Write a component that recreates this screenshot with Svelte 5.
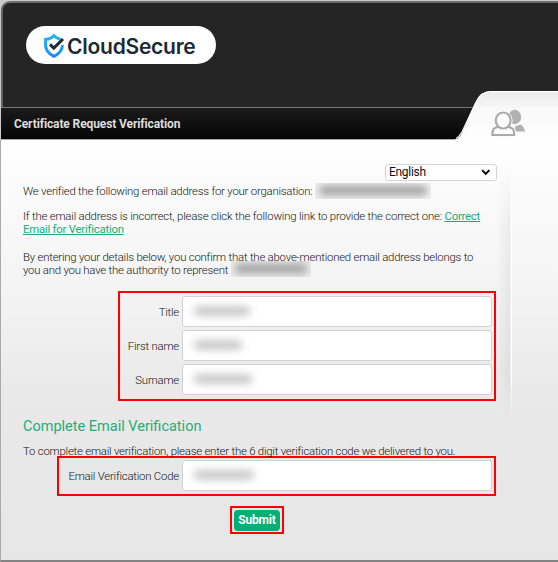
<script>
  const details = [
    { id: 'title', label: 'Title', width: 56 },
    { id: 'first', label: 'First name', width: 48 },
    { id: 'surname', label: 'Surname', width: 58 }
  ];
</script>

<div class="page">
  <header>
    <div class="logo">
      <svg width="22" height="26" viewBox="0 0 22 26" fill="none">
        <defs>
          <linearGradient id="blue" x1="0" y1="0" x2="0" y2="1">
            <stop offset="0" stop-color="#20b5f2" />
            <stop offset="1" stop-color="#168bff" />
          </linearGradient>
        </defs>
        <path d="M17.6 6.3C14.6 5.6 12.7 4.6 11 2.7C9 4.8 6.3 6 2.6 6.4V12C2.6 17.3 5.5 20.7 11 23.3C16.5 20.7 19.3 17.5 19.5 12" stroke="url(#blue)" stroke-width="3" />
        <path d="M7 11.3L10.8 15L20 6" stroke="#1b2b36" stroke-width="3.1" />
      </svg>
      <span>CloudSecure</span>
    </div>
  </header>
  <h1><span>Certificate Request Verification</span></h1>
  <svg class="tab" width="106" height="50" viewBox="0 0 106 50" fill="none">
    <defs>
      <linearGradient id="tabfill" x1="0" y1="0" x2="0" y2="1">
        <stop offset="0" stop-color="#e9e9e9" />
        <stop offset=".35" stop-color="#f8f8f8" />
        <stop offset="1" stop-color="#fefefe" />
      </linearGradient>
    </defs>
    <path d="M0 50Q5 49 8 43L22 12Q26 1 37 1H106V50Z" fill="url(#tabfill)" />
    <path d="M2 48.5Q5 47 8 42L22 12Q27 1.6 37 1.6H106" stroke="#fff" stroke-width="1.2" />
    <g fill="#b1b1b1">
      <ellipse cx="60.8" cy="27" rx="6.4" ry="7.2" />
      <path d="M61 36.5L66.5 34.5Q70 36.5 71 41.5H61Z" />
    </g>
    <path d="M44.5 36.2L40 38.6Q38.2 40 38.2 45H60.4Q60.4 40 58.4 38.6L54.2 36.2" fill="#fcfcfc" stroke="#fcfcfc" stroke-width="4" />
    <ellipse cx="49.2" cy="30.8" rx="9.4" ry="10" fill="#fcfcfc" />
    <path d="M44.3 36.5L40 38.6Q38.4 40 38.4 45H60.2Q60.2 40 58.4 38.6L54.2 36.5" stroke="#aaa" stroke-width="2.2" />
    <ellipse cx="49.2" cy="30.5" rx="7.4" ry="8" fill="#fcfcfc" stroke="#aaa" stroke-width="2.2" />
  </svg>

  <main>
    <div class="divider"></div>
    <div class="language">
      <span>English</span>
      <svg width="10" height="7" viewBox="0 0 10 7"><path d="M1.2 1.2L4.8 4.8L8.4 1.2" fill="none" stroke="#000" stroke-width="1.9" /></svg>
    </div>
    <p class="verified">We verified the following email address for your organisation: <span class="redacted address"><i></i></span></p>
    <p class="incorrect"><span>If the email address is incorrect, please click the following link to provide the correct one:</span> <a href="#correct">Correct</a><br /><a href="#correct">Email for Verification</a></p>
    <p class="confirm">By entering your details below, you confirm that the above-mentioned email address belongs to<br />you and you have the authority to represent <span class="redacted company"><i></i></span></p>

    <section class="details">
      {#each details as field (field.id)}
        <div class="row">
          <label for={field.id}>{field.label}</label>
          <div class="field"><i class="smudge" style="width: {field.width}px"></i><input id={field.id} /></div>
        </div>
      {/each}
    </section>

    <h2>Complete Email Verification</h2>
    <p class="instruction">To complete email verification, please enter the 6 digit verification code we delivered to you.</p>
    <section class="code">
      <div class="row">
        <label for="code">Email Verification Code</label>
        <div class="field"><i class="smudge" style="width: 60px"></i><input id="code" /></div>
      </div>
    </section>
    <div class="submit"><button>Submit</button></div>
  </main>
</div>

<style>
  :global(body) { background: #c9cac9; }
  .page, .page * { box-sizing: border-box; }
  .page {
    position: relative;
    width: 558px;
    height: 562px;
    padding-top: 1px;
    overflow: hidden;
    font-family: Roboto, sans-serif;
    font-size: 11.4px;
    font-weight: 300;
    color: #151515;
  }
  header {
    height: 106px;
    margin-left: 1px;
    padding: 23px 0 0 23px;
    background: #252525;
    border-top: 2px solid #6d6e6d;
    border-left: 2px solid #626362;
    border-top-left-radius: 9px;
  }
  .logo {
    display: flex;
    width: 190px;
    height: 38px;
    padding: 7px 0 0 17px;
    border-radius: 19px;
    background: #fff;
  }
  .logo svg { flex: none; }
  .logo span {
    margin: 2px 0 0 2px;
    font: 600 21px/24px Inter, sans-serif;
    letter-spacing: -.24px;
    color: #1b2b36;
  }
  h1 {
    height: 33px;
    margin: 0 0 0 1px;
    padding-left: 13px;
    border-top: 1px solid #777;
    border-bottom: 1px solid #aaa;
    background: linear-gradient(#1b1b1b, #050505);
    color: #ddd;
    font-size: 12px;
    font-weight: 700;
    letter-spacing: -.11px;
    line-height: 32px;
  }
  .tab { position: absolute; left: 454px; top: 90px; }
  main {
    position: relative;
    height: 422px;
    border-left: 1px solid #aaa;
    border-bottom: 2px solid #828382;
    background: linear-gradient(#fff 0, #fcfcfc 30px, #f4f4f4 145px, #e9e9e9 255px, #e6e6e6 420px);
    padding: 24px 0 0 22px;
  }
  .divider {
    position: absolute;
    left: 496px;
    top: 25px;
    width: 15px;
    height: 255px;
    background: linear-gradient(90deg, transparent, rgba(0,0,0,.055) 13px, #fff 14px);
    mask-image: linear-gradient(transparent, #000 25%, #000 80%, transparent);
  }
  .language {
    display: flex;
    align-items: center;
    justify-content: space-between;
    width: 112px;
    height: 17px;
    margin-left: 362px;
    padding: 0 5px 0 3px;
    border: 1px solid #d5d5d5;
    border-radius: 3px;
    background: #fff;
    color: #111;
    font: 400 12px/15px Roboto, sans-serif;
    letter-spacing: -.3px;
  }
  p { margin: 0; line-height: 12.5px; white-space: nowrap; letter-spacing: -.22px; }
  .verified { height: 14px; margin-top: 3px; line-height: 14px; }
  .incorrect { height: 25px; margin-top: 12px; }
  .incorrect span { letter-spacing: -.2px; }
  .confirm { height: 25px; margin-top: 16px; }
  a { color: #16af77; font-weight: 400; text-decoration: underline; }
  .incorrect a { letter-spacing: -.24px; }
  .redacted {
    display: inline-block;
    height: 16px;
    overflow: hidden;
    vertical-align: top;
    background: rgba(0,0,0,.03);
  }
  .redacted i {
    display: block;
    height: 9px;
    margin: 3px 4px;
    border-radius: 3px;
    background: #999;
    filter: blur(4px);
  }
  .address { width: 116px; margin-top: -1px; margin-bottom: -2px; }
  .company { width: 80px; margin-top: -3px; margin-bottom: -4px; }
  .details {
    display: flex;
    flex-direction: column;
    gap: 3px;
    width: 378px;
    height: 110px;
    margin: 15px 0 0 95px;
    padding: 3px 2px;
    border: 2px solid #f00;
  }
  .row { display: flex; align-items: center; justify-content: flex-end; gap: 3px; letter-spacing: -.22px; }
  .field { position: relative; width: 310px; height: 31px; }
  input {
    display: block;
    width: 100%;
    height: 100%;
    border: 1px solid #d2d2d2;
    border-radius: 3px;
    background: #fff;
    outline: none;
  }
  .smudge {
    position: absolute;
    left: 12px;
    top: 11px;
    height: 8px;
    border-radius: 4px;
    background: #bcbcbc;
    filter: blur(4px);
  }
  h2 {
    margin: 18px 0 0;
    height: 16px;
    color: #22ae78;
    font-size: 14.5px;
    font-weight: 400;
    line-height: 16px;
    white-space: nowrap;
  }
  .instruction { height: 11px; margin-top: 10px; }
  .code {
    width: 439px;
    height: 40px;
    margin: 0 0 0 34px;
    padding: 2px;
    border: 2px solid #f00;
  }
  .submit {
    display: flex;
    align-items: center;
    justify-content: center;
    width: 54px;
    height: 28px;
    margin: 10px 0 0 207px;
    border: 2px solid #f00;
  }
  button {
    width: 46px;
    height: 21px;
    padding: 0;
    border: 0;
    border-radius: 4px;
    background: #00b075;
    color: #fff;
    font: 700 12px/21px Roboto, sans-serif;
    letter-spacing: -.2px;
  }
</style>
